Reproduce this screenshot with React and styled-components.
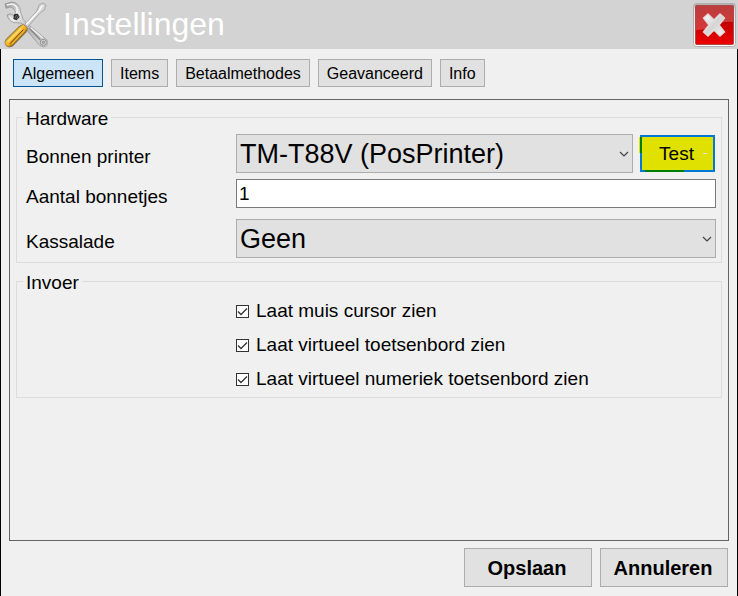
import React, { useState } from "react";
import styled, { createGlobalStyle } from "styled-components";

const GlobalStyle = createGlobalStyle`
  * {
    box-sizing: border-box;
  }
  body {
    margin: 0;
    background: #f0f0f0;
    color: #000;
    font-family: "Liberation Sans", Arial, sans-serif;
    font-size: 19px;
    line-height: 22px;
  }
  button, input, select {
    font: inherit;
    color: inherit;
    margin: 0;
  }
`;

const Window = styled.div`
  display: flex;
  flex-direction: column;
  min-height: 100vh;
`;

const TitleBar = styled.header`
  display: flex;
  align-items: center;
  height: 49px;
  padding: 0 1px 0 4px;
  background: #d3d3d3;
`;

const Title = styled.h1`
  flex: 1;
  margin: 0;
  padding: 0 0 2px 13px;
  color: #fff;
  font-size: 32px;
  font-weight: normal;
  line-height: 46px;
`;

const CloseButton = styled.button`
  display: flex;
  padding: 0;
  border: none;
  background: none;
`;

const Body = styled.main`
  flex: 1;
  display: flex;
  flex-direction: column;
  padding: 10px 8px 9px;
  border: solid #000;
  border-width: 0 1px;
`;

const Tabs = styled.nav`
  display: flex;
  gap: 8px;
  padding: 0 4px 12px;
`;

const Tab = styled.button`
  height: 28px;
  padding: 1px 8px 0;
  border: 1px solid ${(p) => (p.$active ? "#005499" : "#adadad")};
  background: ${(p) => (p.$active ? "#cce4f7" : "#e1e1e1")};
  font-size: 16px;
`;

const Panel = styled.section`
  flex: 1;
  display: flex;
  flex-direction: column;
  gap: 6px;
  padding: 5px 6px;
  border: 1px solid #646464;
`;

const Group = styled.fieldset`
  display: flex;
  flex-direction: column;
  gap: ${(p) => p.$gap || 0}px;
  min-width: 0;
  margin: 0;
  padding: ${(p) => p.$padding};
  border: 1px solid #dcdcdc;
`;

const Legend = styled.legend`
  padding: 4px 3px 0;
  line-height: 20px;
`;

const Row = styled.div`
  display: grid;
  grid-template-columns: 210px 1fr;
  align-items: start;
  min-height: 34px;
  padding: 0 0 ${(p) => (p.$spaced ? 5 : 0)}px 3px;
`;

const Label = styled.label`
  align-self: center;
  padding-top: 6px;
`;

const Controls = styled.div`
  display: flex;
  align-items: center;
  gap: 7px;
  padding-right: 1px;
`;

const SelectBox = styled.div`
  flex: 1;
  display: grid;
  align-items: center;
  & > * {
    grid-area: 1 / 1;
  }
  & > svg {
    justify-self: end;
    margin-right: 4px;
    pointer-events: none;
  }
`;

const Select = styled.select`
  appearance: none;
  width: 100%;
  height: 39px;
  padding: 2px 24px 0 3px;
  border: 1px solid #adadad;
  border-radius: 0;
  background: #e1e1e1;
  font-size: 27px;
  line-height: 35px;
`;

const TextInput = styled.input`
  width: 100%;
  height: 29px;
  padding: 0 2px;
  border: 1px solid #7a7a7a;
  background: #fff;
`;

const TestButton = styled.button`
  position: relative;
  width: 75px;
  height: 37px;
  padding: 0 2px 0 0;
  border: 2px solid #0078d7;
  background: #e1e100;
  &::before,
  &::after {
    content: "";
    position: absolute;
    background: #008000;
  }
  &::before {
    left: -2px;
    top: 0;
    width: 2px;
    height: 16px;
    box-shadow: -1px 0 #e1e100;
  }
  &::after {
    left: 3px;
    bottom: -2px;
    width: 39px;
    height: 2px;
  }
`;

const Dash = styled.span`
  position: absolute;
  right: 6px;
  top: 16px;
  width: 4px;
  height: 1px;
  background: #e1e1e1;
`;

const CheckLabel = styled.label`
  grid-column: 2;
  align-self: center;
  justify-self: start;
  display: flex;
  align-items: center;
  gap: 7px;
`;

const CheckBox = styled.span`
  display: grid;
  & > * {
    grid-area: 1 / 1;
  }
  & > svg {
    pointer-events: none;
  }
  & > input:not(:checked) + svg {
    visibility: hidden;
  }
`;

const Check = styled.input`
  appearance: none;
  width: 13px;
  height: 13px;
  border: 1px solid #333;
  background: #fff;
`;

const Footer = styled.footer`
  display: flex;
  justify-content: flex-end;
  gap: 8px;
  padding: 7px 1px 0 0;
`;

const FooterButton = styled.button`
  width: 128px;
  height: 39px;
  padding: 0 2px 0 0;
  border: 1px solid #adadad;
  background: #e1e1e1;
  font-size: 20px;
  font-weight: bold;
`;

const ToolsIcon = () => (
  <svg width="46" height="48" viewBox="12 0 138 144" aria-hidden="true">
    <defs>
      <linearGradient id="steel" x1="0" y1="0" x2="1" y2="1">
        <stop offset="0" stopColor="#8e8e8e" />
        <stop offset="0.3" stopColor="#e8e8e8" />
        <stop offset="0.6" stopColor="#b4b4b4" />
        <stop offset="1" stopColor="#dcdcdc" />
      </linearGradient>
      <linearGradient id="grip" x1="0" y1="0" x2="1" y2="1">
        <stop offset="0.3" stopColor="#6b4a14" />
        <stop offset="0.42" stopColor="#ffc83a" />
        <stop offset="0.54" stopColor="#f2a818" />
        <stop offset="0.68" stopColor="#4a3c22" />
      </linearGradient>
    </defs>
    {/* wrench */}
    <path
      d="M15 9 L34 3 Q54 4 59 20 L63 38 L70 56 L86 72 L140 116 Q146 124 140 134 Q130 142 119 133 L82 90 L64 66 L42 65 Q26 60 21 42 L30 38 L42 44 L47 34 L40 22 L30 18 L18 22 Z"
      fill="url(#steel)"
      stroke="#8c8c8c"
      strokeWidth="2"
    />
    <path d="M20 12 L36 9 Q50 12 52 26 L50 36" fill="none" stroke="#f2f2f2" strokeWidth="5" />
    <path d="M28 46 Q34 56 44 58" fill="none" stroke="#efefef" strokeWidth="4" />
    <path d="M42 40 L53 38 L59 48 L50 58 L40 54 Z" fill="#2c2c2c" />
    <path d="M45 51 L50 42 M50 54 L55 45" stroke="#999" strokeWidth="2" />
    <path d="M88 82 L121 116" stroke="#858585" strokeWidth="4" />
    <path d="M92 80 L128 110" stroke="#f0f0f0" strokeWidth="4" />
    <circle cx="130" cy="124" r="9" fill="#e6e6e6" stroke="#8a8a8a" strokeWidth="3" />
    <circle cx="130" cy="124" r="4" fill="#b5b5b5" stroke="#777" strokeWidth="2" />
    {/* screwdriver */}
    <path
      d="M118 11 L130 6 L138 13 L133 27 L118 38 L83 78 L74 70 L110 31 Z"
      fill="#d6d6d6"
      stroke="#8f8f8f"
      strokeWidth="2"
    />
    <path d="M127 13 L116 31 L79 70" fill="none" stroke="#fff" strokeWidth="4" />
    <path
      d="M58 76 L70 70 L83 82 L78 94 L38 135 Q27 142 18 134 Q11 124 19 114 Z"
      fill="url(#grip)"
      stroke="#75684c"
      strokeWidth="2"
    />
    <path d="M64 82 L24 122" stroke="#ffd866" strokeWidth="5" />
    <path d="M70 86 L30 128" stroke="#54401c" strokeWidth="3" />
    <path d="M74 88 L35 130" stroke="#f5b52c" strokeWidth="4" />
  </svg>
);

const CloseIcon = () => (
  <svg width="45" height="47" viewBox="0 0 45 47" aria-hidden="true">
    <defs>
      <linearGradient id="frame" x1="0" y1="0" x2="0" y2="1">
        <stop offset="0" stopColor="#a8a8a8" />
        <stop offset="0.15" stopColor="#e4e4e4" />
        <stop offset="1" stopColor="#fff" />
      </linearGradient>
      <linearGradient id="red" x1="0" y1="0" x2="0" y2="1">
        <stop offset="0" stopColor="#a80808" />
        <stop offset="0.6" stopColor="#cc0000" />
        <stop offset="1" stopColor="#ee0000" />
      </linearGradient>
      <linearGradient id="cross" x1="0" y1="0" x2="1" y2="1">
        <stop offset="0" stopColor="#fff" />
        <stop offset="0.5" stopColor="#d4d4d4" />
        <stop offset="1" stopColor="#f4f4f4" />
      </linearGradient>
    </defs>
    <rect x="1.5" y="2.5" width="42" height="43" rx="3" fill="url(#frame)" stroke="#b0b0b0" />
    <rect x="3.5" y="4.5" width="38" height="39" rx="1" fill="url(#red)" stroke="#b04848" />
    <path d="M4 5 H41 V21 Q30 20 21 25 Q13 29 4 29 Z" fill="#fff" opacity="0.22" />
    <path
      d="M16 13 L22 19 L28 13 L32.5 17 L27 24 L32.5 31 L28 35 L22 29 L16 35 L11.5 31 L17 24 L11.5 17 Z"
      fill="url(#cross)"
      stroke="#e2dada"
      strokeWidth="1.5"
      strokeLinejoin="round"
    />
  </svg>
);

const Chevron = () => (
  <svg width="10" height="6" viewBox="0 0 10 6" aria-hidden="true">
    <path d="M1 1 L5 5 L9 1" fill="none" stroke="#444" strokeWidth="1.2" />
  </svg>
);

const Tick = () => (
  <svg width="13" height="13" viewBox="0 0 13 13" aria-hidden="true">
    <path d="M2 6.5 L5 9.5 L11 3.5" fill="none" stroke="#333" strokeWidth="1.3" />
  </svg>
);

const tabs = ["Algemeen", "Items", "Betaalmethodes", "Geavanceerd", "Info"];

const inputOptions = [
  { name: "cursor", text: "Laat muis cursor zien" },
  { name: "keyboard", text: "Laat virtueel toetsenbord zien" },
  { name: "numpad", text: "Laat virtueel numeriek toetsenbord zien" },
];

export default () => {
  const [tab, setTab] = useState("Algemeen");
  const [data, setData] = useState({
    copies: "1",
    cursor: true,
    keyboard: true,
    numpad: true,
  });

  const handleChange = (e) => {
    const { name, type, value, checked } = e.target;
    setData({ ...data, [name]: type === "checkbox" ? checked : value });
  };

  return (
    <Window>
      <GlobalStyle />
      <TitleBar>
        <ToolsIcon />
        <Title>Instellingen</Title>
        <CloseButton type="button" aria-label="Sluiten">
          <CloseIcon />
        </CloseButton>
      </TitleBar>
      <Body>
        <Tabs>
          {tabs.map((t) => (
            <Tab key={t} type="button" $active={t === tab} onClick={() => setTab(t)}>
              {t}
            </Tab>
          ))}
        </Tabs>
        <Panel>
          <Group $gap={6} $padding="5px 5px 4px 6px">
            <Legend>Hardware</Legend>
            <Row>
              <Label htmlFor="printer">Bonnen printer</Label>
              <Controls>
                <SelectBox>
                  <Select id="printer" name="printer">
                    <option>TM-T88V (PosPrinter)</option>
                  </Select>
                  <Chevron />
                </SelectBox>
                <TestButton type="button">
                  Test
                  <Dash />
                </TestButton>
              </Controls>
            </Row>
            <Row $spaced>
              <Label htmlFor="copies">Aantal bonnetjes</Label>
              <TextInput
                id="copies"
                name="copies"
                type="text"
                value={data.copies}
                onChange={handleChange}
              />
            </Row>
            <Row>
              <Label htmlFor="drawer">Kassalade</Label>
              <SelectBox>
                <Select id="drawer" name="drawer">
                  <option>Geen</option>
                </Select>
                <Chevron />
              </SelectBox>
            </Row>
          </Group>
          <Group $padding="1px 5px 1px 6px">
            <Legend>Invoer</Legend>
            {inputOptions.map(({ name, text }) => (
              <Row key={name}>
                <CheckLabel>
                  <CheckBox>
                    <Check
                      type="checkbox"
                      name={name}
                      checked={data[name]}
                      onChange={handleChange}
                    />
                    <Tick />
                  </CheckBox>
                  {text}
                </CheckLabel>
              </Row>
            ))}
          </Group>
        </Panel>
        <Footer>
          <FooterButton type="button">Opslaan</FooterButton>
          <FooterButton type="button">Annuleren</FooterButton>
        </Footer>
      </Body>
    </Window>
  );
};
